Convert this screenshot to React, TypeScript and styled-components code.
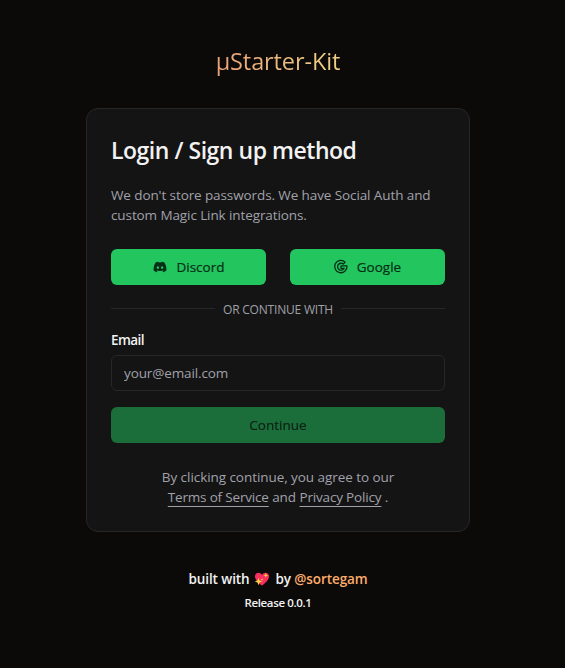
import React from "react";
import styled, { createGlobalStyle } from "styled-components";
import { FaDiscord } from "react-icons/fa";

const GlobalStyle = createGlobalStyle`
  *, *::before, *::after { box-sizing: border-box; }
  body {
    margin: 0;
    background: #0c0a09;
    color: #f2f2f2;
    font-family: "Open Sans", "Noto Sans", sans-serif;
    font-size: 13.5px;
    line-height: 20px;
  }
  h1, h2, p { margin: 0; }
  button, input { font: inherit; }
`;

const Page = styled.main`
  width: 556px;
  height: 668px;
  display: flex;
  flex-direction: column;
  align-items: center;
`;

const Brand = styled.h1`
  margin-top: 43px;
  height: 36px;
  font-size: 23.5px;
  font-weight: 450;
  line-height: 36px;
  letter-spacing: -0.1px;
  white-space: nowrap;
  background: linear-gradient(to right, #e9a178, #eed285);
  background-clip: text;
  -webkit-background-clip: text;
  color: transparent;
`;

const Card = styled.section`
  width: 384px;
  height: 424px;
  margin-top: 29px;
  padding: 24px;
  display: flex;
  flex-direction: column;
  background: #141414;
  border: 1px solid #27272a;
  border-radius: 12px;
`;

const Heading = styled.h2`
  height: 36px;
  font-size: 23px;
  font-weight: 600;
  line-height: 34px;
  letter-spacing: -0.47px;
  white-space: nowrap;
`;

const Description = styled.p`
  margin-top: 16px;
  color: #a1a1aa;
  letter-spacing: -0.1px;
  white-space: nowrap;
`;

const Providers = styled.div`
  margin-top: 24px;
  display: grid;
  grid-template-columns: 1fr 1fr;
  gap: 24px;
`;

const Button = styled.button`
  height: 36px;
  padding: 0;
  display: flex;
  align-items: center;
  justify-content: center;
  gap: 8px;
  border: 0;
  border-radius: 6px;
  background: #22c55e;
  color: #052e16;
  font-weight: 500;
  -webkit-text-stroke: 0.2px currentColor;

  &:disabled { opacity: 0.5; }
`;

const DiscordMark = styled(FaDiscord)`
  width: 14px;
  height: 12px;
  margin: 0 1px;
  stroke: none;
`;

const GoogleMark = styled.svg`
  width: 16px;
  height: 16px;
  margin-left: -1px;
  fill: none;
  stroke: currentColor;
  stroke-width: 1.3;
  stroke-linejoin: round;
`;

const Divider = styled.div`
  margin-top: 16px;
  height: 16px;
  display: flex;
  align-items: flex-start;
  gap: 8px;
  color: #a1a1aa;
  font-size: 12px;
  line-height: 18px;
  letter-spacing: -0.2px;
  white-space: nowrap;

  &::before, &::after {
    content: "";
    flex: 1;
    height: 1px;
    margin-top: 7px;
    background: #27272a;
  }
`;

const Label = styled.label`
  margin-top: 13px;
  font-weight: 650;
  letter-spacing: -0.55px;
`;

const Input = styled.input`
  height: 36px;
  margin: 5px 0 16px;
  padding: 0 12px;
  border: 1px solid #27272a;
  border-radius: 6px;
  background: transparent;
  color: #f2f2f2;
  outline: 0;
  letter-spacing: -0.12px;
  &::placeholder { color: #a1a1aa; opacity: 1; }
`;

const Terms = styled.p`
  margin-top: 24px;
  color: #a1a1aa;
  letter-spacing: -0.06px;
  text-align: center;
  white-space: nowrap;
`;

const TermsLink = styled.a`
  letter-spacing: -0.18px;
  text-decoration: underline;
  text-decoration-thickness: 1px;
  text-underline-offset: 4px;
`;

const Footer = styled.footer`
  margin-top: 37px;
  display: flex;
  flex-direction: column;
  align-items: center;
  font-weight: 600;
`;

const Credit = styled.p`
  display: flex;
  align-items: center;
  letter-spacing: -0.1px;
  white-space: pre;
`;

const Handle = styled.a`
  color: #fdad6b;
`;

const Heart = styled.svg`
  width: 16px;
  height: 16px;
  margin: 0 6px 0 4px;
`;

const Release = styled.p`
  margin-top: 5px;
  font-size: 11.5px;
  font-weight: 650;
  line-height: 18px;
  letter-spacing: -0.35px;
`;

export default function App() {
  return (
    <>
      <GlobalStyle />
      <Page>
        <Brand>μStarter-Kit</Brand>
        <Card>
          <Heading>Login / Sign up method</Heading>
          <Description>
            We don't store passwords. We have Social Auth and
            <br />
            custom Magic Link integrations.
          </Description>
          <Providers>
            <Button><DiscordMark preserveAspectRatio="none" />Discord</Button>
            <Button>
              <GoogleMark viewBox="0 0 16 16" aria-hidden="true">
                <path d="M12.2 3.1A6.2 6.2 0 1 0 14 6.8H8V9.3H11.2A3.5 3.5 0 1 1 10.3 5Z" />
              </GoogleMark>
              Google
            </Button>
          </Providers>
          <Divider>OR CONTINUE WITH</Divider>
          <Label htmlFor="email">Email</Label>
          <Input id="email" type="email" placeholder="your@email.com" />
          <Button disabled>Continue</Button>
          <Terms>
            By clicking continue, you agree to our
            <br />
            <TermsLink>Terms of Service</TermsLink> and <TermsLink>Privacy Policy</TermsLink> .
          </Terms>
        </Card>
        <Footer>
          <Credit>
            built with
            <Heart viewBox="0 0 16 16" aria-hidden="true">
              <path d="M8 14.5C5 12 1 9 1 5.4C1 1.4 6 .6 8 4C10 .6 15 1.4 15 5.4C15 9 11 12 8 14.5Z" fill="#f92f60" />
              <path d="M4.5 6.7L5.5 9.5L8.2 10.5L5.5 11.5L4.5 14.3L3.5 11.5L.8 10.5L3.5 9.5ZM11.8 2L12.4 3.8L14.2 4.4L12.4 5L11.8 6.8L11.2 5L9.4 4.4L11.2 3.8ZM8 7.2L8.4 8.2L9.4 8.6L8.4 9L8 10L7.6 9L6.6 8.6L7.6 8.2Z" fill="#fcd53f" />
            </Heart>
            by <Handle>@sortegam</Handle>
          </Credit>
          <Release>Release 0.0.1</Release>
        </Footer>
      </Page>
    </>
  );
}
